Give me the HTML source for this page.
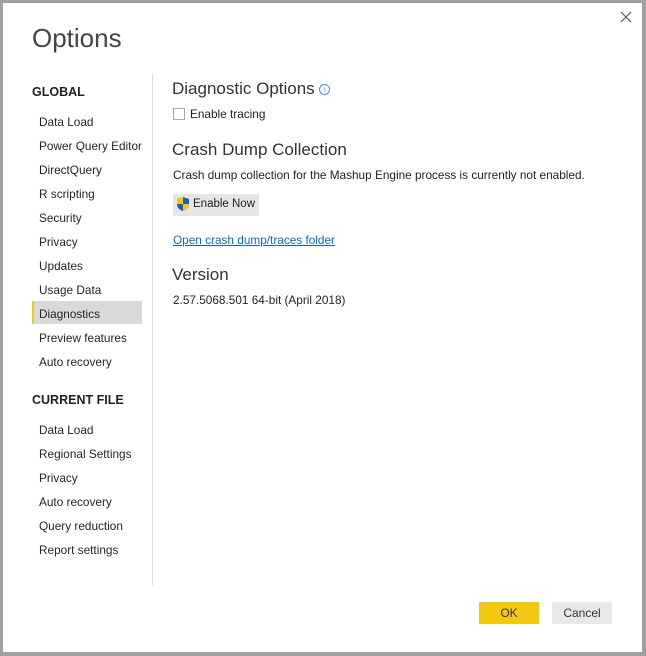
<!DOCTYPE html><html><head><style>
body{margin:0;width:646px;height:656px;background:#a0a0a0;position:relative;font-family:"Liberation Sans",sans-serif;overflow:hidden}
#d{position:absolute;left:3px;top:3px;width:639px;height:649px;background:#fff}
.a{position:absolute;white-space:nowrap;color:#222}
.n{position:absolute;left:36px;font-size:11.8px;color:#252525;height:22px;line-height:22px}
.h{font-size:17px;color:#333}
</style></head><body><div id="d">
<div class="a" style="left:29px;top:20px;font-size:26px;color:#444">Options</div>
<svg style="position:absolute;left:617px;top:8px" width="12" height="12" viewBox="0 0 12 12"><path d="M1 1L11 11M11 1L1 11" stroke="#555" stroke-width="1.2"/></svg>
<div class="a" style="left:29px;top:82px;font-size:12.5px;font-weight:bold;color:#222">GLOBAL</div>
<div style="position:absolute;left:29px;top:298px;width:110px;height:23px;background:#d9d9d9;border-left:2px solid #f2c811;box-sizing:border-box"></div>
<div class="n" style="top:108px">Data Load</div>
<div class="n" style="top:132px">Power Query Editor</div>
<div class="n" style="top:156px">DirectQuery</div>
<div class="n" style="top:180px">R scripting</div>
<div class="n" style="top:204px">Security</div>
<div class="n" style="top:228px">Privacy</div>
<div class="n" style="top:252px">Updates</div>
<div class="n" style="top:276px">Usage Data</div>
<div class="n" style="top:300px">Diagnostics</div>
<div class="n" style="top:324px">Preview features</div>
<div class="n" style="top:348px">Auto recovery</div>
<div class="a" style="left:29px;top:390px;font-size:12.5px;font-weight:bold">CURRENT FILE</div>
<div class="n" style="top:416px">Data Load</div>
<div class="n" style="top:440px">Regional Settings</div>
<div class="n" style="top:464px">Privacy</div>
<div class="n" style="top:488px">Auto recovery</div>
<div class="n" style="top:512px">Query reduction</div>
<div class="n" style="top:536px">Report settings</div>
<div style="position:absolute;left:149px;top:71px;width:1px;height:512px;background:#ddd"></div>
<div class="a h" style="left:169px;top:76px">Diagnostic Options <span style="display:inline-block;width:9px;height:9px;border:1px solid #4a8fd8;border-radius:50%;font-size:8px;line-height:9px;text-align:center;color:#4a8fd8;vertical-align:2px">i</span></div>
<div style="position:absolute;left:170px;top:105px;width:10px;height:10px;border:1px solid #aaa"></div>
<div class="a" style="left:187px;top:104px;font-size:11.8px">Enable tracing</div>
<div class="a h" style="left:169px;top:137px">Crash Dump Collection</div>
<div class="a" style="left:170px;top:165px;font-size:11.8px">Crash dump collection for the Mashup Engine process is currently not enabled.</div>
<div style="position:absolute;left:170px;top:191px;width:86px;height:22px;background:#e6e6e6"></div>
<svg style="position:absolute;left:173px;top:193px" width="14" height="16" viewBox="0 0 14 16"><path d="M7 1L1 3v5c0 4 3 6 6 7 3-1 6-3 6-7V3z" fill="#1e5fb4"/><path d="M7 1v7H1V3zM7 8h6c0 4-3 6-6 7z" fill="#f2c811"/></svg>
<div class="a" style="left:190px;top:195px;font-size:11.5px">Enable Now</div>
<div class="a" style="left:170px;top:230px;font-size:11.8px;color:#1565c0;text-decoration:underline">Open crash dump/traces folder</div>
<div class="a h" style="left:169px;top:262px">Version</div>
<div class="a" style="left:170px;top:290px;font-size:11.8px">2.57.5068.501 64-bit (April 2018)</div>
<div style="position:absolute;left:476px;top:599px;width:60px;height:22px;background:#f2c811;font-size:12px;line-height:22px;text-align:center;color:#333">OK</div>
<div style="position:absolute;left:549px;top:599px;width:60px;height:22px;background:#e8e8e8;font-size:12px;line-height:22px;text-align:center;color:#333">Cancel</div>
</div></body></html>
